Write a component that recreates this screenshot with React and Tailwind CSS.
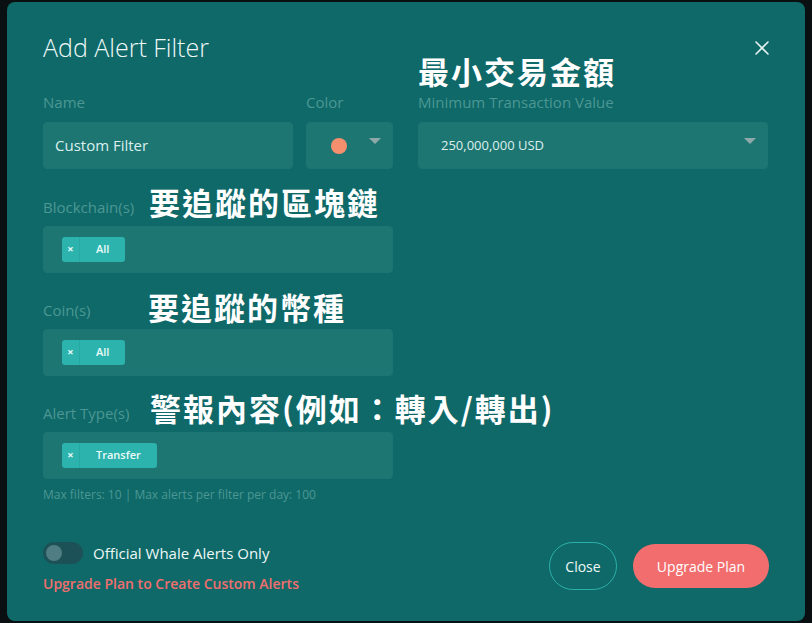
const font = { fontFamily: '"Open Sans", "Lato", sans-serif' };

function Caret() {
  return (
    <span className="absolute right-[11px] top-[15px] h-0 w-0 border-x-[6px] border-t-[6px] border-x-transparent border-t-[#8fa9ab]" />
  );
}

function Chip({ label }) {
  return (
    <span className="flex h-[25px] items-stretch overflow-hidden rounded-[3px] bg-[#2db3ad] text-[11px] font-semibold text-[#e9fbf9]">
      <span className="flex w-[18px] items-center justify-center border-r border-[#27a8a3] text-[11px] font-bold">×</span>
      <span className="flex items-center px-[16px]">{label}</span>
    </span>
  );
}

function Note({ children, className }) {
  return (
    <span
      className={`absolute whitespace-nowrap text-[31px] font-bold leading-[40px] tracking-[2px] text-white ${className}`}
      style={{ fontFamily: '"Noto Sans CJK TC", "Noto Sans CJK SC", sans-serif' }}
    >
      {children}
    </span>
  );
}

function Label({ children }) {
  return <div className="h-5 text-[15px] leading-5 text-[#4c9793]">{children}</div>;
}

function TagField({ label, note, noteClass, tag }) {
  return (
    <div className="relative">
      <Label>{label}</Label>
      <Note className={noteClass}>{note}</Note>
      <div className="mt-[9px] flex h-[47px] w-[350px] items-center rounded-[4px] border border-[#1c7572] bg-[#1e7672] px-[18px]">
        <Chip label={tag} />
      </div>
    </div>
  );
}

export default function App() {
  return (
    <div className="h-[623px] w-[812px] overflow-hidden bg-[#0a1011] pl-[7px] pt-[2px]" style={font}>
      <div className="relative h-[619px] w-[798px] rounded-[8px] bg-[#0f6969] px-[36px] pt-[29px]">
        <div className="flex items-center justify-between">
          <h2 className="text-[25px] font-light leading-8 text-[#eef8f7]">Add Alert Filter</h2>
          <svg width="16" height="16" viewBox="0 0 16 16" className="mr-[-1px] mt-[2px]">
            <path d="M2 2L14 14M14 2L2 14" stroke="#e6f2f1" strokeWidth="1.6" strokeLinecap="round" />
          </svg>
        </div>

        <div className="mt-[29px] flex">
          <div className="w-[250px]">
            <Label>Name</Label>
            <div className="mt-[10px] flex h-[47px] items-center rounded-[4px] border border-[#1c7572] bg-[#1e7672] px-[11px] text-[15px] text-[#dcefed]">
              Custom Filter
            </div>
          </div>
          <div className="ml-[13px] w-[87px]">
            <Label>Color</Label>
            <div className="relative mt-[10px] flex h-[47px] items-center rounded-[4px] border border-[#1c7572] bg-[#1e7672] pl-[24px]">
              <span className="h-[16px] w-[16px] rounded-full bg-[#f58f6e]" />
              <Caret />
            </div>
          </div>
          <div className="relative ml-[25px] w-[350px]">
            <Note className="-top-[41px] left-0">最小交易金額</Note>
            <Label>Minimum Transaction Value</Label>
            <div className="relative mt-[10px] flex h-[47px] items-center rounded-[4px] border border-[#1c7572] bg-[#1e7672] pl-[22px] text-[13px] text-[#dcefed]">
              250,000,000 USD
              <Caret />
            </div>
          </div>
        </div>

        <div className="mt-[28px] flex flex-col gap-[27px]">
          <TagField label="Blockchain(s)" note="要追蹤的區塊鏈" noteClass="left-[106px] -top-[15px]" tag="All" />
          <TagField label="Coin(s)" note="要追蹤的幣種" noteClass="left-[105px] -top-[13px]" tag="All" />
          <TagField
            label="Alert Type(s)"
            note="警報內容(例如：轉入/轉出)"
            noteClass="left-[107px] -top-[15px]"
            tag="Transfer"
          />
        </div>

        <p className="mt-[8px] text-[12px] leading-4 text-[#4c9793]">
          Max filters: 10 | Max alerts per filter per day: 100
        </p>

        <div className="mt-[39px] flex items-start justify-between">
          <div>
            <div className="flex items-center gap-[10px]">
              <span className="flex h-[22px] w-[40px] items-center rounded-full bg-[#1c5257] pl-[3px]">
                <span className="h-[16px] w-[16px] rounded-full bg-[#4f7d83]" />
              </span>
              <span className="text-[15px] text-[#eef8f7]">Official Whale Alerts Only</span>
            </div>
            <p className="mt-[8px] text-[14px] font-semibold text-[#ef6f6f]">Upgrade Plan to Create Custom Alerts</p>
          </div>
          <div className="flex items-center gap-[16px]">
            <button className="h-[48px] w-[68px] rounded-full border border-[#2bb0a8] text-[14px] text-[#eef8f7]">
              Close
            </button>
            <button className="h-[44px] w-[136px] rounded-full bg-[#f26d6d] text-[14px] text-white">
              Upgrade Plan
            </button>
          </div>
        </div>
      </div>
    </div>
  );
}
